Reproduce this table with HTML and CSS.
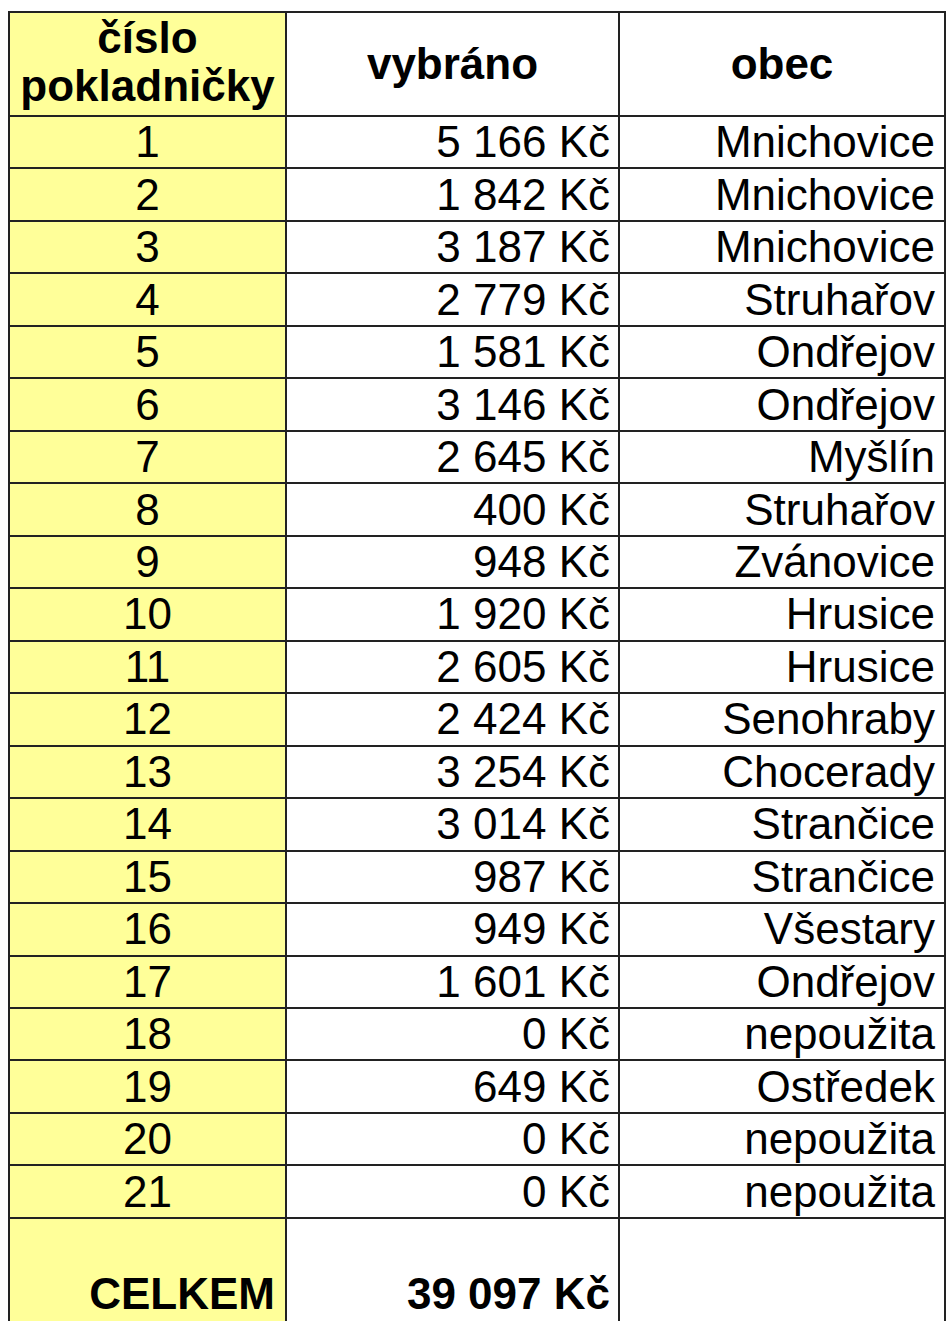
FILE: index.html
```html
<!DOCTYPE html>
<html lang="cs">
<head>
<meta charset="utf-8">
<title>Pokladničky</title>
<link rel="stylesheet" href="styles.css">
</head>
<body>
<table class="sbirka">
  <colgroup>
    <col class="c-num">
    <col class="c-sum">
    <col class="c-obec">
  </colgroup>
  <thead>
    <tr class="head">
      <th class="num">číslo<br>pokladničky</th>
      <th>vybráno</th>
      <th>obec</th>
    </tr>
  </thead>
  <tbody>
    <tr><td class="num">1</td><td class="sum">5 166 Kč</td><td class="obec">Mnichovice</td></tr>
    <tr><td class="num">2</td><td class="sum">1 842 Kč</td><td class="obec">Mnichovice</td></tr>
    <tr><td class="num">3</td><td class="sum">3 187 Kč</td><td class="obec">Mnichovice</td></tr>
    <tr><td class="num">4</td><td class="sum">2 779 Kč</td><td class="obec">Struhařov</td></tr>
    <tr><td class="num">5</td><td class="sum">1 581 Kč</td><td class="obec">Ondřejov</td></tr>
    <tr><td class="num">6</td><td class="sum">3 146 Kč</td><td class="obec">Ondřejov</td></tr>
    <tr><td class="num">7</td><td class="sum">2 645 Kč</td><td class="obec">Myšlín</td></tr>
    <tr><td class="num">8</td><td class="sum">400 Kč</td><td class="obec">Struhařov</td></tr>
    <tr><td class="num">9</td><td class="sum">948 Kč</td><td class="obec">Zvánovice</td></tr>
    <tr><td class="num">10</td><td class="sum">1 920 Kč</td><td class="obec">Hrusice</td></tr>
    <tr><td class="num">11</td><td class="sum">2 605 Kč</td><td class="obec">Hrusice</td></tr>
    <tr><td class="num">12</td><td class="sum">2 424 Kč</td><td class="obec">Senohraby</td></tr>
    <tr><td class="num">13</td><td class="sum">3 254 Kč</td><td class="obec">Chocerady</td></tr>
    <tr><td class="num">14</td><td class="sum">3 014 Kč</td><td class="obec">Strančice</td></tr>
    <tr><td class="num">15</td><td class="sum">987 Kč</td><td class="obec">Strančice</td></tr>
    <tr><td class="num">16</td><td class="sum">949 Kč</td><td class="obec">Všestary</td></tr>
    <tr><td class="num">17</td><td class="sum">1 601 Kč</td><td class="obec">Ondřejov</td></tr>
    <tr><td class="num">18</td><td class="sum">0 Kč</td><td class="obec">nepoužita</td></tr>
    <tr><td class="num">19</td><td class="sum">649 Kč</td><td class="obec">Ostředek</td></tr>
    <tr><td class="num">20</td><td class="sum">0 Kč</td><td class="obec">nepoužita</td></tr>
    <tr><td class="num">21</td><td class="sum">0 Kč</td><td class="obec">nepoužita</td></tr>
    <tr class="total"><td class="num">CELKEM</td><td class="sum">39 097 Kč</td><td class="obec"></td></tr>
  </tbody>
</table>
</body>
</html>
```

FILE: styles.css
```css
html, body {
  background: #ffffff;
}
body {
  margin: 11px 0 0 8px;
  font-family: "Liberation Sans", Arial, Helvetica, sans-serif;
  color: #000000;
}
.sbirka {
  border-collapse: collapse;
  table-layout: fixed;
  width: 936px;
  font-size: 44px;
}
.c-num { width: 277px; }
.c-sum { width: 333px; }
.c-obec { width: 326px; }
.sbirka th,
.sbirka td {
  border: 2px solid #222222;
  padding: 0;
  line-height: 48px;
  overflow: hidden;
  white-space: nowrap;
}
.sbirka th {
  font-weight: bold;
  text-align: center;
  vertical-align: middle;
}
.head {
  height: 104px;
}
.sbirka tbody tr {
  height: 52.48px;
}
.sbirka td.num {
  background: #ffff99;
  text-align: center;
}
.sbirka th.num {
  background: #ffff99;
  padding-bottom: 4px;
}
.sbirka td.sum {
  text-align: right;
  padding-right: 8px;
}
.sbirka td.obec {
  text-align: right;
  padding-right: 9px;
}
.sbirka tbody tr.total {
  height: 106px;
}
.sbirka .total td {
  vertical-align: bottom;
  font-weight: bold;
  padding-bottom: 5px;
}
.sbirka .total td.num {
  text-align: right;
  padding-right: 10px;
}
.sbirka .total td.obec {
  border-bottom-color: #8a8a6a;
}
```
